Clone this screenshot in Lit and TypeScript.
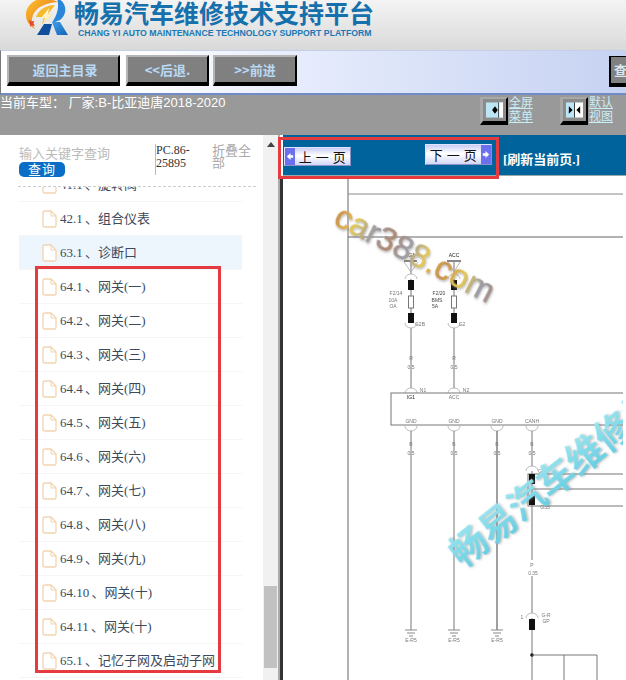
import { LitElement, html, css, svg } from "lit";
import { customElement } from "lit/decorators.js";

const rows = [
  "41.1 、旋转阀", "42.1 、组合仪表", "63.1 、诊断口", "64.1 、网关(一)", "64.2 、网关(二)", "64.3 、网关(三)",
  "64.4 、网关(四)", "64.5 、网关(五)", "64.6 、网关(六)", "64.7 、网关(七)", "64.8 、网关(八)",
  "64.9 、网关(九)", "64.10 、网关(十)", "64.11 、网关(十)", "65.1 、记忆子网及启动子网",
];

const ln = (x1: number, y1: number, x2: number, y2: number, w = 1, c = "#777") =>
  svg`<line x1=${x1} y1=${y1} x2=${x2} y2=${y2} stroke=${c} stroke-width=${w}></line>`;
const block = (x: number, y: number, h: number) => svg`<rect x=${x - 3} y=${y} width="6" height=${h} fill="#111"></rect>`;
const arcTop = (x: number, y: number) => svg`<path d="M${x - 6} ${y + 5} A6 5 0 0 1 ${x + 6} ${y + 5}" fill="#fff" stroke="#aaa" stroke-width=".8"></path>`;
const arcBot = (x: number, y: number) => svg`<path d="M${x - 6} ${y} A6 5 0 0 0 ${x + 6} ${y}" fill="#fff" stroke="#aaa" stroke-width=".8"></path>`;
const tiny = (x: number, y: number, t: string, c = "#777") => svg`<text x=${x} y=${y} font-size="5" fill=${c} text-anchor="middle" font-family="Liberation Sans, sans-serif">${t}</text>`;
const ground = (x: number) => svg`
  ${ln(x - 6, 630, x + 6, 630, 1, "#888")}${ln(x - 4, 633, x + 4, 633, 1, "#888")}${ln(x - 2, 636, x + 2, 636, 1, "#888")}
  ${tiny(x, 642, "E-R5")}`;

@customElement("app-root")
export class AppRoot extends LitElement {
  static styles = css`
    :host { display: block; width: 626px; height: 680px; overflow: hidden; position: relative; background: #fff;
      font-family: "Liberation Sans", "Noto Sans CJK SC", sans-serif; }
    .head { height: 50px; display: flex; padding-left: 24px; overflow: hidden; box-sizing: border-box;
      background: linear-gradient(#f4f4f4, #d9d9d9); }
    .logo { width: 45px; height: 36px; flex: none; }
    .brand { margin-left: 5px; }
    .title { font: 700 25px/24px "Noto Sans CJK SC", sans-serif; color: #1670ac; white-space: nowrap; }
    .sub { font: 700 8.7px/12px "Liberation Sans", sans-serif; color: #1a78b4; margin: 3px 0 0 4px; white-space: nowrap; }

    .nav { height: 45px; box-sizing: border-box; display: flex; padding: 4px 0 7px 6px; position: relative; overflow: hidden;
      border-top: 1px solid #c4d0e8; border-bottom: 2px solid #6f8cc9; border-left: 1px solid #777;
      background: linear-gradient(90deg, #fff 0, #fdfdff 150px, #e6ecfc 300px, #c6d2f2 100%); }
    .nbtn { box-sizing: border-box; height: 31px; background: #808080; color: #b9d9f5; font: 700 13px/25px "Noto Sans CJK SC", sans-serif;
      text-align: center; border-style: solid; border-width: 2px 2px 4px 2px;
      border-color: #b5b5b5 #000 #000 #b5b5b5; white-space: nowrap; flex: none; }
    .w1 { width: 113px; padding-left: 3px; }
    .w2 { width: 83px; margin-left: 6px; }
    .w3 { width: 84px; margin-left: 4px; }
    .spacer { flex: 1; }
    .w4 { width: 17px; margin-top: 1px; text-align: left; padding-left: 3px; color: #dbe6ee; border-width: 1px 0 4px 2px; border-color: #000; overflow: hidden; }

    .info { height: 40px; background: #999; display: flex; color: #fff; }
    .model { font-size: 13px; line-height: 15px; width: 480px; flex: none; white-space: nowrap; }
    .tool { display: flex; width: 80px; flex: none; padding-top: 2px; }
    .tbtn { box-sizing: border-box; width: 28px; height: 28px; background: #8b8b8b; border-style: solid; border-width: 2px 2px 4px 3px;
      border-color: #a8a8a8 #000 #000 #a8a8a8; padding: 3px; flex: none; }
    .tbtn svg { display: block; width: 100%; height: 100%; }
    .tlab { font-size: 12px; line-height: 14px; color: #c9edf5; text-decoration: underline; margin: -1px 0 0 1px; width: 26px; }

    .main { display: flex; height: 545px; }
    .left { width: 263px; flex: none; overflow: hidden; }
    .search { height: 52px; box-sizing: border-box; border-bottom: 1px dashed #ccc; margin: 0 7px 0 18px; display: flex; padding: 10px 0 0 1px; }
    .kw { width: 136px; flex: none; }
    .kwt { font-size: 13px; line-height: 17px; color: #bbb; white-space: nowrap; }
    .go { width: 46px; height: 15px; border-radius: 5px; background: #0a6ec6; color: #fff; font-size: 13px; line-height: 15px;
      text-align: center; letter-spacing: 1px; }
    .pc { width: 57px; flex: none; box-sizing: border-box; border-left: 1px solid #bbb; font: 12px/13px "Liberation Serif", serif; color: #333; height: 31px; margin-top: -1px; }
    .fold { width: 40px; font-size: 13px; line-height: 12px; color: #aaa; }
    .list { margin: -19px 0 0 19px; width: 223px; }
    .row { height: 34px; box-sizing: border-box; border-bottom: 1px solid #f5f5f5; display: flex; align-items: center; padding-left: 23px; gap: 3px;
      font: 13px/16px "Liberation Serif", "Noto Sans CJK SC", serif; word-spacing: -1px; color: #3d4a5c; white-space: nowrap; }
    .row.on { background: #eef6fd; }
    .row svg { width: 15px; height: 18px; flex: none; }
    .clip { height: 493px; overflow: hidden; }

    .sb { width: 15px; flex: none; background: #f1f1f1; display: flex; flex-direction: column; align-items: center; }
    .up { width: 0; height: 0; margin-top: 7px; border: 4px solid transparent; border-top: 0; border-bottom: 5px solid #444; }
    .thumb { width: 13px; height: 82px; background: #c1c1c1; margin-top: 439px; }

    .right { flex: 1; display: flex; flex-direction: column; min-width: 0; border-left: 2px solid #aaa; }
    .bar { height: 41px; flex: none; background: #00639c; margin-left: 3px; position: relative; display: flex; box-sizing: border-box; border-bottom: 1px solid #9aa; }
    .pg { box-sizing: border-box; position: absolute; display: flex; height: 19px; align-items: center; font: 13px/17px "Noto Sans CJK SC", sans-serif; color: #111;
      background: linear-gradient(#c9cdf6, #fff 45%, #d3d7f8); border: 1px solid #dfe3ff; border-right-color: #8a93c8; border-bottom-color: #8a93c8; white-space: nowrap; }
    .pg span { flex: 1; text-align: center; letter-spacing: .5px; }
    .pg svg { width: 10px; height: 100%; background: #6d70ee; flex: none; display: block; }
    .prev { left: 1px; top: 12px; width: 67px; }
    .next { left: 142px; top: 9px; width: 67px; height: 21px; }
    .refresh { position: absolute; left: 220px; top: 16px; font: 700 13px/18px "Liberation Serif", "Noto Sans CJK SC", serif; color: #fff; white-space: nowrap; }
    .sheet { flex: 1; border-left: 3px solid #333; min-height: 0; overflow: hidden; }
    .sheet svg { display: block; }
    .wire { filter: blur(.45px); }

    .mark { position: absolute; border: 3px solid #e53a40; box-sizing: border-box; pointer-events: none; }
    .m1 { left: 278px; top: 137px; width: 221px; height: 42px; }
    .m2 { left: 35px; top: 266px; width: 186px; height: 407px; }
  `;

  private file() {
    return html`<svg viewBox="0 0 15 18"><path d="M2.5 1h6.5l5 5v9.5a1.5 1.5 0 0 1-1.500 1.500h-10a1.500 1.500 0 0 1-1.500-1.500v-13a1.500 1.500 0 0 1 1.500-1.500z" fill="#fff" stroke="#f2d4b0" stroke-width="1.300"/><path d="M9 1v5h5" fill="none" stroke="#f2d4b0" stroke-width="1"/></svg>`;
  }

  private logo() {
    return html`<svg class="logo" viewBox="0 0 45 36">
      <defs><linearGradient id="og" x1="0" y1="0" x2="1" y2="1"><stop offset="0" stop-color="#fbc531"/><stop offset=".6" stop-color="#f08a1c"/><stop offset="1" stop-color="#e2501a"/></linearGradient>
      <linearGradient id="bl" x1="0" y1="0" x2="1" y2="1"><stop offset="0" stop-color="#3fa0e8"/><stop offset="1" stop-color="#1262b8"/></linearGradient></defs>
      <path d="M24 -2C10 -3 1 7 2 16c.6 6 4 10 9 13-3-4-4-9-2-14C12 8 20 3 34 2z" fill="url(#og)"/>
      <path d="M12 17C15 9 23 5 31 5c-3 4-5 6-7 9l4 1-10 9 2-7z" fill="#f6b92a"/>
      <path d="M17 18l8-10-1 6 4 1-9 8 2-5z" fill="#fff3c4"/>
      <path d="M2 22l4 2 3-1-1 3 2 3-4-1-2 2 0-3z" fill="#e4482a" transform="translate(3 0) scale(.8 .9)"/>
      <path d="M33 -2C43 2 44 14 36 20l-8 3c4-7 8-14 5-25z" fill="#2a86d8"/>
      <path d="M20 24h8l-3 11H13z" fill="#0f4f9e"/>
      <path d="M28 22h8l8 13H33z" fill="url(#bl)"/>
    </svg>`;
  }

  private diagram() {
    return html`<svg width="340" height="504" viewBox="283 176 340 504" font-family="Liberation Sans, sans-serif">
      <defs>
        <linearGradient id="wm" gradientUnits="userSpaceOnUse" x1="0" y1="0" x2="60" y2="0" spreadMethod="reflect">
          <stop offset="0" stop-color="#c98e4a"/><stop offset=".35" stop-color="#e3c858"/><stop offset=".7" stop-color="#9a9aa8"/><stop offset="1" stop-color="#b08a70"/>
        </linearGradient>
        <linearGradient id="wc" x1="0" y1="0" x2="0" y2="1"><stop offset="0" stop-color="#a8eaf2"/><stop offset="1" stop-color="#5cc9de"/></linearGradient>
        <filter id="sh" x="-10%" y="-30%" width="120%" height="160%"><feGaussianBlur stdDeviation=".4" result="b"/><feDropShadow in="b" dx="1.200" dy="1.200" stdDeviation="1" flood-color="#777" flood-opacity=".5"/></filter>
      </defs>
      <g class="wire">
        ${ln(348, 176, 348, 680, 1, "#666")}
        ${ln(348, 194, 626, 194, 1, "#888")}
        ${ln(348, 237, 626, 237, 1, "#666")}
        ${[411, 454].map((x) => svg`
          ${ln(x, 262, x, 392)}
          ${arcTop(x, 274)}${block(x, 280, 10)}
          <rect x=${x - 2.5} y="296" width="5" height="12" fill="#fff" stroke="#777"></rect>
          ${block(x, 313, 10)}${arcBot(x, 323)}${arcTop(x, 388)}
          ${tiny(x, 360, "R")}${tiny(x, 369, "0.5")}
        `)}
        ${ln(404, 261, 417, 261, 1, "#111")}${ln(447, 261, 461, 261, 1, "#111")}
        <path d="M448 262l6 10 6-10" fill="none" stroke="#aaa" stroke-width=".8"></path>
        <path d="M404 262l7 10 7-10" fill="none" stroke="#aaa" stroke-width=".8"></path>
        ${tiny(411, 257, "IG1", "#222")}${tiny(454, 257, "ACC", "#222")}
        ${tiny(396, 295, "F2/14")}${tiny(393, 302, "10A")}${tiny(393, 308, "OA")}
        ${tiny(439, 295, "F2/20", "#444")}${tiny(437, 302, "BMS", "#444")}${tiny(435, 308, "5A", "#444")}
        ${tiny(420, 326, "G2B")}${tiny(462, 326, "G2")}${tiny(423, 392, "N1")}${tiny(466, 392, "N2")}
        <rect x="391" y="393" width="240" height="32" fill="none" stroke="#777" stroke-width="1"></rect>
        ${tiny(411, 399, "IG1", "#222")}${tiny(454, 399, "ACC")}
        ${[411, 454, 497, 532].map((x, i) => svg`
          ${tiny(x, 423, i === 3 ? "CANH" : "GND")}${arcBot(x, 426)}
          ${ln(x, 431, x, i === 3 ? 680 : 630, i === 2 ? 1.4 : 1)}
          ${tiny(x, 446, "B")}${tiny(x, 455, "0.5")}
        `)}
        ${ground(411)}${ground(454)}${ground(497)}
        <rect x="528" y="474" width="110" height="32" fill="none" stroke="#777"></rect>
        ${ln(528, 489, 626, 489)}${ln(625, 489, 625, 506)}
        ${block(532, 474, 10)}${block(532, 495, 10)}
        ${arcTop(532, 466)}
        ${tiny(543, 473, "G35")}${tiny(545, 509, "G35")}
        <rect x="528" y="560" width="8" height="16" fill="#fff"></rect>
        ${tiny(532, 567, "P")}${tiny(533, 575, "0.35")}
        ${arcTop(532, 613)}${block(532, 619, 11)}
        ${tiny(546, 617, "G-R")}${tiny(546, 623, "GP")}${tiny(522, 619, "1")}
        <circle cx="532" cy="655" r="1.800" fill="#111"></circle>
        <path d="M532 655H597V680M564 655V680" fill="none" stroke="#777"></path>
      </g>
      <text transform="translate(332 224) rotate(27)" font-size="33.500" fill="url(#wm)" stroke="url(#wm)" stroke-width=".6" filter="url(#sh)">car388.com</text>
      <text transform="translate(463 569) rotate(-38.500)" font-size="37" font-weight="700" font-family="Noto Sans CJK SC, sans-serif" fill="url(#wc)" filter="url(#sh)">畅易汽车维修技术</text>
    </svg>`;
  }

  render() {
    return html`
      <div class="head">
        ${this.logo()}
        <div class="brand">
          <div class="title">畅易汽车维修技术支持平台</div>
          <div class="sub">CHANG YI AUTO MAINTENANCE TECHNOLOGY SUPPORT PLATFORM</div>
        </div>
      </div>
      <div class="nav">
        <div class="nbtn w1">返回主目录</div>
        <div class="nbtn w2">&lt;&lt;后退.</div>
        <div class="nbtn w3">&gt;&gt;前进</div>
        <div class="spacer"></div>
        <div class="nbtn w4">查</div>
      </div>
      <div class="info">
        <div class="model">当前车型： 厂家:B-比亚迪唐2018-2020</div>
        <div class="tool">
          <div class="tbtn"><svg viewBox="0 0 18 16"><rect width="18" height="16" fill="#bce6f6"/><rect x="13" width="1" height="16" fill="#222"/><rect x="14" width="4" height="16" fill="#fff"/><path d="M9.500 4l3 4-3 4-3-4z" fill="#000"/></svg></div>
          <div class="tlab">全屏 菜单</div>
        </div>
        <div class="tool">
          <div class="tbtn"><svg viewBox="0 0 18 16"><rect width="9" height="16" fill="#bce6f6"/><rect x="9" width="9" height="16" fill="#fff"/><rect x="8.500" width="1" height="16" fill="#333"/><path d="M3 4l4 4-4 4zM15 4l-4 4 4 4z" fill="#000"/></svg></div>
          <div class="tlab">默认 视图</div>
        </div>
      </div>
      <div class="main">
        <div class="left">
          <div class="search">
            <div class="kw"><div class="kwt">输入关键字查询</div><div class="go">查询</div></div>
            <div class="pc">PC.86-<br />25895</div>
            <div class="fold">折叠全部</div>
          </div>
          <div class="clip"><div class="list">
            ${rows.map((r, i) => html`<div class="row ${i === 2 ? "on" : ""}">${this.file()}<span>${r}</span></div>`)}
          </div></div>
        </div>
        <div class="sb"><div class="up"></div><div class="thumb"></div></div>
        <div class="right">
          <div class="bar">
            <div class="pg prev"><svg viewBox="0 0 10 19"><path d="M1.500 9.500l4-4v2.500h3v3h-3v2.500z" fill="#fff"/></svg><span>上 一 页</span></div>
            <div class="pg next"><span>下 一 页</span><svg viewBox="0 0 10 21"><path d="M8.500 10.500l-4-4v2.500h-3v3h3v2.500z" fill="#fff"/></svg></div>
            <div class="refresh">[刷新当前页.]</div>
          </div>
          <div class="sheet">${this.diagram()}</div>
        </div>
      </div>
      <div class="mark m1"></div>
      <div class="mark m2"></div>
    `;
  }
}
